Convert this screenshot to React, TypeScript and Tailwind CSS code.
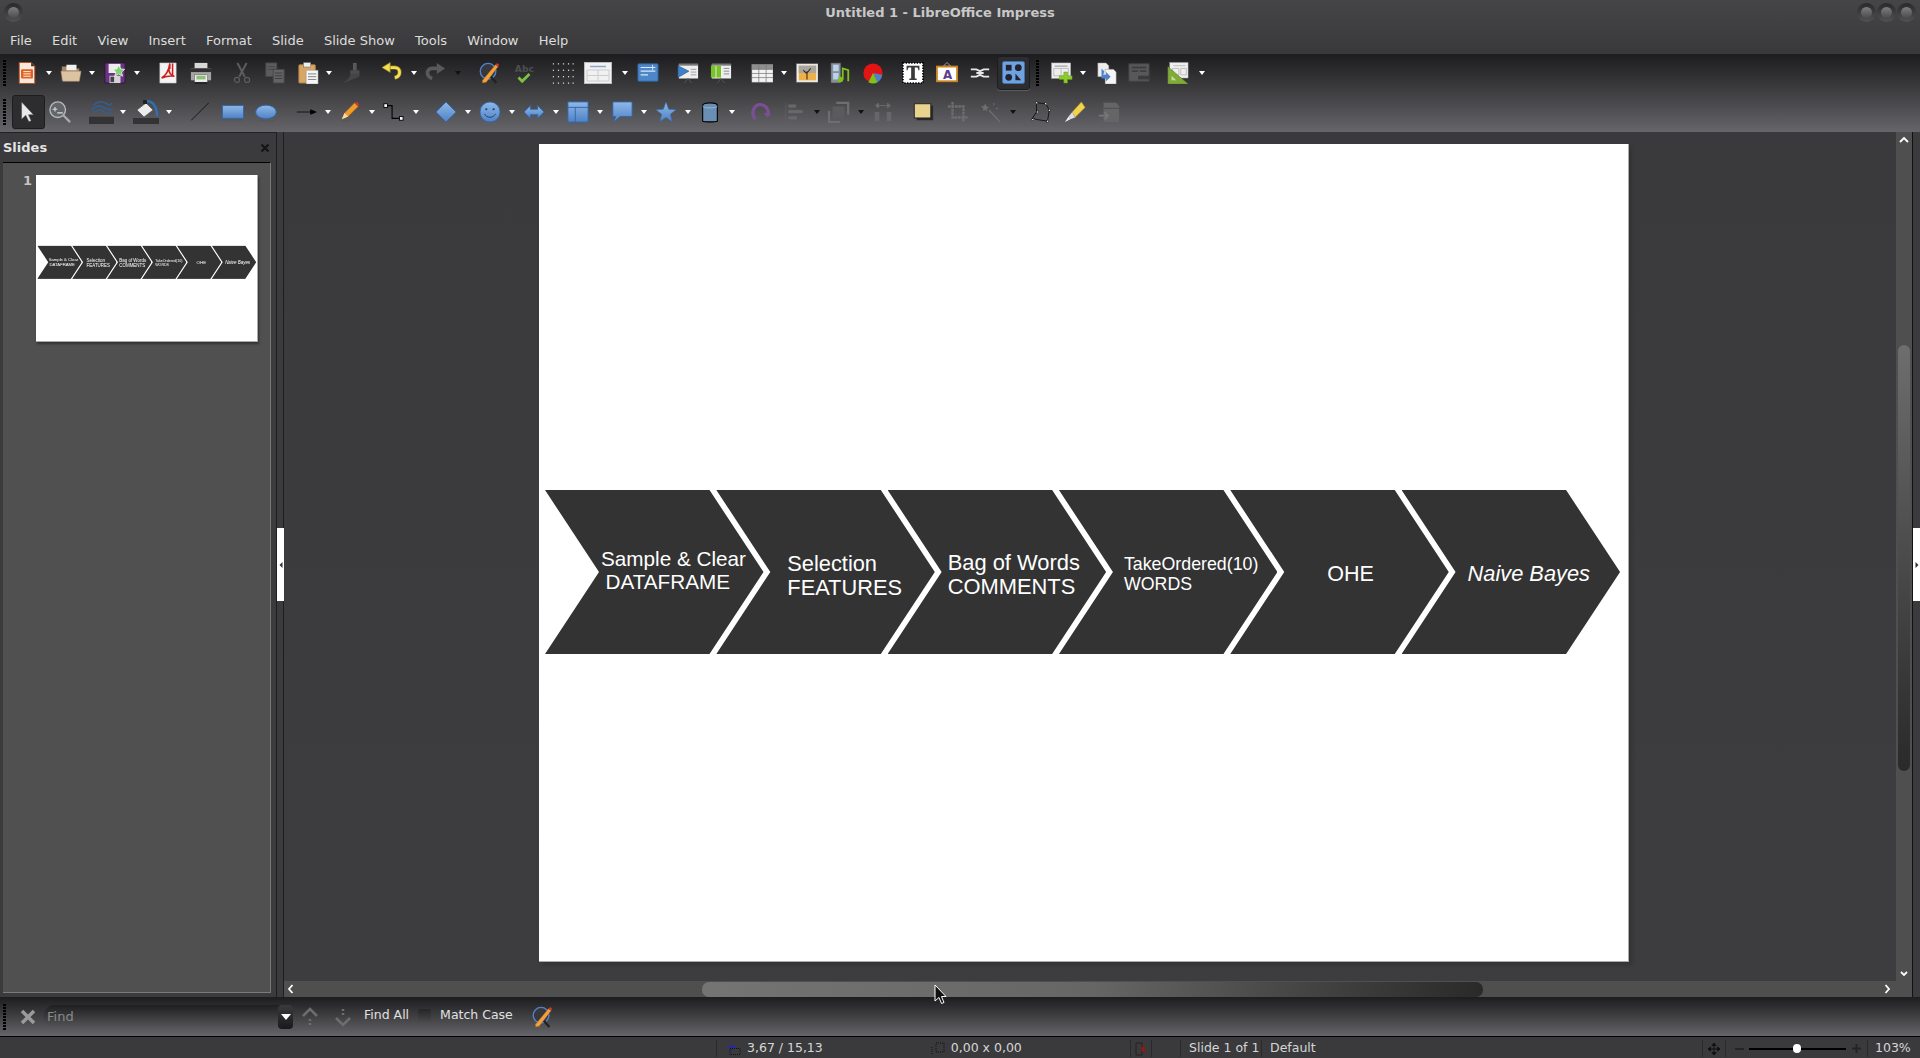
import React from "react";

type P = { c?: string; children?: React.ReactNode };
const S = ({ c = "h-[22px] w-[22px]", v = "0 0 24 24", children }: P & { v?: string }) => (
  <svg viewBox={v} className={`block flex-none ${c}`}>
    {children}
  </svg>
);
const DD = ({ c = "", dark }: { c?: string; dark?: boolean }) => (
  <svg viewBox="0 0 10 6" className={`block h-[6px] w-[10px] flex-none ${c}`}>
    <path d="M2 1h6L5 5z" fill={dark ? "#111" : "#fff"} />
  </svg>
);
const Grip = ({ c = "" }: { c?: string }) => (
  <div className={`flex h-[26px] w-[4px] flex-none flex-col gap-[1px] ${c}`}>
    {Array.from({ length: 9 }).map((_, i) => (
      <div key={i} className="h-[2px] w-[3px] bg-black" />
    ))}
  </div>
);

const New = () => <><path d="M3.500 .500h13l4 4v19h-17z" fill="#f6e9dc" stroke="#b4481b" /><path d="M16.500 .500l4 4h-4z" fill="#4a2b1c" /><rect x="5.500" y="8" width="13" height="10" rx="1" fill="#e0601f" /><path d="M8 10.500h8M8 13h8M8 15.500h8" stroke="#fff" /></>;
const Open = () => <><path d="M2 5h8l2 2h9v13H2z" fill="#a58a69" /><path d="M7 3h11v6H7z" fill="#f4f2ec" /><path d="M1 10h22l-2 11H3z" fill="#dcc4a2" stroke="#a98f6e" strokeWidth=".6" /></>;
const Save = () => <><rect x="1" y="1" width="22" height="22" rx="1" fill="#6a3483" stroke="#2c1538" /><rect x="5" y="2" width="13" height="10" fill="#efeaf0" /><rect x="6" y="15" width="12" height="8" fill="#d7d2d8" /><rect x="7" y="16" width="4" height="6" fill="#444" /><path d="M16 3l2 4.500 4.500.5-3.300 3 1 4.500-4.200-2.400-4.200 2.400 1-4.500-3.300-3 4.500-.5z" fill="#7bd46f" stroke="#fff" strokeWidth=".8" /></>;
const Pdf = () => <><path d="M3 1h18v22H3z" fill="#f4f4f4" stroke="#aaa" strokeWidth=".5" /><path d="M14 1.500c-1 7-4 13-9 16 5-2 9-3 14-2-4-1-6-4-6-8M14 1.500v6M17 1.500v14" fill="none" stroke="#cf1c1c" strokeWidth="1.700" /></>;
const Print = () => <><rect x="5" y="1" width="14" height="6" fill="#d8d8d8" /><path d="M1 7h22v13H1z" fill="#a5a5a5" /><path d="M1 7h22v4H1z" fill="#2f2f2f" /><rect x="5" y="14" width="14" height="8" fill="#eee" stroke="#555" strokeWidth=".5" /><rect x="7" y="15" width="10" height="4" fill="#8fbf7a" /><path d="M5 23h14" stroke="#222" strokeWidth="2" /></>;
const Cut = () => <g fill="none" stroke="#5c5c5e" strokeWidth="2.200"><path d="M7 1l8 15M17 1L9 16" /><circle cx="6.500" cy="19.500" r="2.800" strokeWidth="1.300" /><circle cx="17.500" cy="19.500" r="2.800" strokeWidth="1.300" /></g>;
const Copy = () => <><rect x="2" y="1" width="12" height="15" fill="#5c5c5e" stroke="#454547" /><path d="M4 5h8M4 8h8" stroke="#454547" /><rect x="10" y="8" width="12" height="15" fill="#636365" stroke="#444" /><path d="M12 12h8M12 15h8M12 18h8" stroke="#3c3c3e" /></>;
const Paste = () => <><rect x="2" y="3" width="18" height="20" rx="1" fill="#d9a765" stroke="#a87b3f" /><rect x="7" y=".500" width="8" height="5" fill="#eee" stroke="#555" strokeWidth=".5" /><path d="M10 9h13v15H10z" fill="#f7f7f7" stroke="#888" strokeWidth=".5" /><path d="M12 13h9M12 16h9M12 19h9" stroke="#777" /></>;
const Clone = () => <><rect x="12" y="1" width="4" height="8" fill="#59595b" /><path d="M9 9h10v4H9z" fill="#4d4d4f" /><path d="M9 13h10v3L4 22H1c5-2 8-5 8-9z" fill="#454547" /></>;
const Undo = () => <><path d="M9 6h6c7 0 7 10 0 11" fill="none" stroke="#8e7a1e" strokeWidth="4.500" /><path d="M9 6h6c7 0 7 10 0 11" fill="none" stroke="#f4de55" strokeWidth="3" /><path d="M10 .500L1 6l9 5.500z" fill="#f4de55" stroke="#8e7a1e" strokeWidth=".7" /></>;
const Redo = () => <><path d="M15 7H9c-7 0-7 9 0 11" fill="none" stroke="#59595b" strokeWidth="4" /><path d="M14 1l9 6-9 6z" fill="#59595b" /></>;
const Find = () => <><circle cx="11" cy="10" r="8.500" fill="#37373c" stroke="#4f83c9" strokeWidth="1.500" /><path d="M14 16l6 7" stroke="#222" strokeWidth="2.500" /><path d="M5 20L19 3l3 2L9 22l-4 1z" fill="#f2a13c" stroke="#a5641c" strokeWidth=".5" /><path d="M19 3l3 2 1-2-2-2z" fill="#d8342c" /></>;
const Spell = () => <><text x="2" y="11" fontSize="10" fontFamily="DejaVu Sans" fill="#4e4e50" fontWeight="700">Abc</text><path d="M6 17l4 4 8-8" fill="none" stroke="#7cc242" strokeWidth="3" /></>;
const Dots = () => <g fill="#e4e4e4">{[1.500, 7, 12.500, 18, 23].flatMap((x) => [2, 9, 16, 23].map((y) => <rect key={`${x}${y}`} x={x - 0.6} y={y - 0.6} width="1.300" height="1.300" />))}</g>;
const Lay = () => <><rect x=".500" y=".500" width="27" height="21" fill="#f1f1f1" stroke="#bbb" /><path d="M6 4.500h16" stroke="#8aa7cf" strokeWidth="1.500" /><path d="M3 8h22v11H3zM14 8v11M3 13.500h22" stroke="#ccc" fill="none" /></>;
const Form = () => <><rect x="1" y="2" width="22" height="19" rx="1" fill="#4d86c9" stroke="#2b5e9e" /><path d="M4 6h16M4 10h16M4 14h8" stroke="#dbe8f7" strokeWidth="1.200" /><path d="M17 3v6" stroke="#dbe8f7" /></>;
const Present = () => <><rect x="2" y="2" width="21" height="16" fill="#eee" /><path d="M2 2h21v2H2z" fill="#777" /><path d="M1 4l12 6-12 7z" fill="#3f7fc4" stroke="#1f4f87" strokeWidth=".6" /><path d="M15 8h6M15 11h6M15 14h6" stroke="#999" /><path d="M12 18l-4 5M12 18l4 5" stroke="#555" /></>;
const Present2 = () => <><rect x="2" y="2" width="21" height="16" fill="#eee" /><path d="M2 2h21v2H2z" fill="#777" /><rect x="1" y="4" width="5" height="13" fill="#79c229" /><rect x="7" y="4" width="5" height="13" fill="#79c229" /><path d="M15 7h6M15 10h6M15 13h6" stroke="#888" /><path d="M12 18l-4 5M12 18l4 5" stroke="#555" /></>;
const Tbl = () => <><rect x="1" y="3" width="23" height="19" fill="#f2f2f2" stroke="#999" strokeWidth=".5" /><path d="M1 3h23v5H1z" fill="#8f8f8f" /><path d="M1 8h23M1 12.500h23M1 17h23M8.500 3v19M16.500 3v19" stroke="#777" strokeWidth=".8" /></>;
const Img = () => <><rect x=".500" y="2" width="23.500" height="20" fill="#eee" stroke="#888" strokeWidth=".5" /><rect x="3" y="4" width="19" height="16" fill="#efb04a" /><path d="M3 4h19v8H3z" fill="#a8a6a0" /><path d="M12 19v-9M12 13l-4-4M12 12l4-5" stroke="#3d2c1c" strokeWidth="1.200" fill="none" /></>;
const Movie = () => <><rect x="2" y="1" width="11" height="22" fill="#8a8f96" stroke="#333" strokeWidth=".7" /><rect x="4.500" y="3" width="6" height="7" fill="#b8d3ef" /><rect x="4.500" y="12" width="6" height="7" fill="#b8d3ef" /><path d="M15 19V7l6 2v12" fill="none" stroke="#7ec11f" strokeWidth="2" /><circle cx="12.500" cy="19" r="3" fill="#7ec11f" /></>;
const Chart = () => <><circle cx="12" cy="12" r="10.500" fill="#e31414" /><path d="M12 12l10 2a10.500 10.500 0 0 1-5 8z" fill="#4f83c9" /><path d="M12 12l5 10a10.500 10.500 0 0 1-10 0z" fill="#7ec11f" /></>;
const TextB = () => <><rect x="1" y="1" width="22" height="22" fill="#fff" stroke="#000" strokeDasharray="1.500 1.500" strokeWidth="2" /><path d="M5 4h14v5h-1l-1-3h-3v12h2v1.500H8V18h2V6H7L6 9H5z" fill="#3a3a3a" /></>;
const Fontwork = () => <><path d="M12 .500l4 4H8z" fill="none" stroke="#aaa" /><rect x="1" y="5" width="22" height="16" fill="#fff" stroke="#c9841f" strokeWidth="2" /><text x="7.500" y="18" fontSize="13" fontWeight="700" fontFamily="DejaVu Sans" fill="#5b3d8c">A</text></>;
const Glue = () => <path d="M2 8h6l4 2 4-2h6M2 16h6l4-2 4 2h6M8 12h8" stroke="#e8e8e8" strokeWidth="2" fill="none" />;
const Shapes = () => <><rect x=".500" y=".500" width="23" height="23" rx="2" fill="#6fa3df" stroke="#3f73b0" /><rect x="4" y="4" width="6" height="6" fill="#223" /><circle cx="17" cy="7" r="3.500" fill="#223" /><circle cx="7" cy="17" r="3.500" fill="#223" /><path d="M14 13l6 7h-6z" fill="#223" /></>;
const NewSlide = () => <><rect x=".500" y="1" width="21" height="17" fill="#eee" stroke="#999" strokeWidth=".5" /><path d="M4 4.500h14" stroke="#aaa" strokeWidth="1.500" /><path d="M3 7h16v8H3zM11 7v8" fill="none" stroke="#bbb" /><path d="M14 11h4v4h5v4h-5v4h-4v-4H9v-4h5z" fill="#8ccb2e" stroke="#5f9a16" strokeWidth=".5" /></>;
const Dup = () => <><path d="M2 1h9l3 3v12H2z" fill="#eee" stroke="#888" strokeWidth=".5" /><path d="M10 8h9l3 3v13H10z" fill="#f5f5f5" stroke="#888" strokeWidth=".5" /><path d="M6 7l3 3-1 4h3v-3l5 5-5 5v-3H6z" fill="#4f83c9" /></>;
const Sum = () => <><rect x="1" y="2" width="22" height="19" fill="#58585a" stroke="#444" /><path d="M4 6h16M4 10h7M13 10h7" stroke="#3e3e40" strokeWidth="2" /><rect x="11" y="15" width="13" height="4" fill="#3b3b3d" /></>;
const Master = () => <><rect x="3" y=".500" width="20" height="17" fill="#eee" stroke="#999" strokeWidth=".5" /><path d="M7 4h13M6 7h7v7H6zM15 7h6v7h-6z" fill="none" stroke="#bbb" /><path d="M1 5l22 19H1z" fill="#80aa3a" stroke="#5c7e25" strokeWidth=".6" /><path d="M5 15l5 5H5z" fill="#c7dc8f" /></>;

const Arrow = () => <path d="M5 1v19l4.500-4.500 3.500 7 2.500-1-3-6.500H18z" fill="#e9e9e9" stroke="#444" strokeWidth=".5" />;
const Zoom = () => <><circle cx="9.500" cy="9.500" r="8.500" fill="#62656a" stroke="#b5b9be" strokeWidth="1.500" /><path d="M15 15l8 8" stroke="#aaa" strokeWidth="2.500" /><path d="M4 9h5M6.500 6.500v5M9 13h6" stroke="#ddd" fill="none" strokeWidth="1.200" /></>;
const LineCol = () => <><path d="M4 6c5-4 9-4 12-2s5 2 6 0M2 10c5-4 9-4 12-2s7 3 9 1M4 13c4-3 8-3 10-1s5 2 7 0" fill="none" stroke="#2f5f99" strokeWidth="1.300" /><rect y="17" width="24" height="7" fill="#333335" /></>;
const FillCol = () => <><path d="M4 11l9-7 7 7-9 7z" fill="#ececec" stroke="#555" strokeWidth=".7" /><path d="M11 3c6-3 13 2 13 14" fill="none" stroke="#2f6fb3" strokeWidth="2.500" /><rect x="10" y="1" width="4" height="4" fill="#222" /><rect y="19" width="26" height="6" fill="#333335" /></>;
const LineI = () => <path d="M2.500 21L21.500 2" stroke="#111" strokeWidth="1" />;
const Rect = () => <><rect x=".500" y="5" width="23" height="14" fill="url(#blueg)" stroke="#2f66a9" /><rect x="1" y="20" width="22" height="1.200" fill="#555" /></>;
const Ell = () => <><ellipse cx="12" cy="12" rx="11.300" ry="7.500" fill="url(#blueg)" stroke="#2f66a9" /><rect x="3" y="21" width="18" height="1.200" fill="#555" /></>;
const ArrowR = () => <path d="M2 12h19M17 9.500l6 2.500-6 2.500z" stroke="#000" fill="#000" strokeWidth=".8" />;
const Pencil = () => <><path d="M3 20l3-7L17 2l4 4L10 17z" fill="#ef9b2d" stroke="#8f5a14" strokeWidth=".6" /><path d="M17 2l4 4 1-2-2-3z" fill="#d8342c" /><path d="M3 20l3-7 4 4z" fill="#f3dcb3" /><path d="M3 22h9" stroke="#555" /></>;
const Conn = () => <><path d="M4 5h7v14h10" fill="none" stroke="#000" strokeWidth="1.200" /><rect x="2" y="3" width="4" height="4" fill="#fff" stroke="#000" /><rect x="19" y="17" width="4" height="4" fill="#fff" stroke="#000" /></>;
const Dia = () => <path d="M12 1l11 11-11 11L1 12z" fill="url(#blueg)" stroke="#2f66a9" />;
const Smile = () => <><circle cx="12" cy="12" r="11" fill="url(#blueg)" stroke="#2f66a9" /><circle cx="8" cy="9" r="1.200" fill="#1c3f6e" /><circle cx="16" cy="9" r="1.200" fill="#1c3f6e" /><path d="M6 14c2 5 10 5 12 0" fill="none" stroke="#1c3f6e" /></>;
const Dbl = () => <path d="M1 12l7-7v4h8V5l7 7-7 7v-4H8v4z" fill="url(#blueg)" stroke="#2f66a9" />;
const Flow = () => <><rect x="1" y="1" width="22" height="22" fill="url(#blueg)" stroke="#2f66a9" /><path d="M1 7h22M9 7v16" stroke="#2f66a9" /></>;
const Call = () => <path d="M3 1h19a1 1 0 0 1 1 1v14a1 1 0 0 1-1 1H10l-7 6 2-6H3a1 1 0 0 1-1-1V2a1 1 0 0 1 1-1z" fill="url(#blueg)" stroke="#2f66a9" />;
const Star = () => <path d="M12 1l3 8 8 .5-6.200 5 2 8L12 18l-6.800 4.500 2-8L1 9.500 9 9z" fill="url(#blueg)" stroke="#2f66a9" strokeWidth=".6" />;
const Cyl = () => <><path d="M4 5c0-4 16-4 16 0v17c-2 1-14 1-16 0z" fill="#6a8fb5" stroke="#000" strokeWidth="1.200" /><path d="M4 6c2 2 14 2 16 0" fill="none" stroke="#9bb8d6" /></>;
const Rot = () => <><path d="M7 20C1 13 6 4 12 4s10 5 9 12" fill="none" stroke="#7b4f95" strokeWidth="3.500" /><path d="M16 13h8l-4 5z" fill="#7b4f95" /></>;
const Align = () => <path d="M2 2v20M5 4h8v3H5zM5 10h15v3H5zM5 17h9v3H5z" fill="#69696b" stroke="#69696b" strokeWidth=".5" />;
const Arr = () => <><path d="M9 2h13v13" fill="none" stroke="#6e6e70" strokeWidth="2.500" /><rect x="5" y="6" width="13" height="13" fill="#5b5b5d" /><path d="M1 11v12h12" fill="none" stroke="#6e6e70" strokeWidth="2.500" /></>;
const Dist = () => <><path d="M4 5h16M4 5l3-2.500v5zM20 5l-3-2.500v5z" stroke="#6c6c6e" fill="#6c6c6e" /><rect x="3" y="12" width="5" height="10" fill="#676769" /><rect x="16" y="12" width="5" height="10" fill="#676769" /></>;
const Shadow = () => <><rect x="5" y="5" width="18" height="16" fill="#2a2a2a" /><rect x="2.500" y="3" width="18" height="15.500" fill="#e8d48e" stroke="#222" /></>;
const Crop = () => <path d="M6 1v17h17M1 6h17v17" fill="none" stroke="#6e6e70" strokeWidth="2.500" strokeDasharray="3 .8" />;
const Wand = () => <><path d="M10 10l12 13" stroke="#6e6e70" strokeWidth="1.500" /><path d="M6 3l1 3 3 .5-2.500 2 .5 3-2.500-2L3 11l.5-3L1 6l3-.5z" fill="#6e6e70" /><path d="M15 2v3M17 8h3" stroke="#6e6e70" /></>;
const Pts = () => <><path d="M6 2l10 1 4 7-2 12-13-2-3-2 4-6z" fill="none" stroke="#111" /><g fill="#fff" stroke="#000" strokeWidth=".5">{[[6, 2], [16, 3], [20, 10], [18, 22], [2, 20], [7, 12]].map(([x, y]) => <rect key={`${x}${y}`} x={x - 1} y={y - 1} width="2" height="2" />)}</g></>;
const High = () => <><path d="M9 12L19 1l4 6-11 11z" fill="#f0d44e" stroke="#a58f28" strokeWidth=".6" /><path d="M9 12l3 6-5 2-2-3z" fill="#ddd" /><path d="M5 17l2 3-6 3z" fill="#eee" /></>;
const Ext = () => <><path d="M6 2h14l3 4v17H6z" fill="#656567" /><path d="M6 8h17" stroke="#4c4c4e" /><path d="M1 16h9M7 12l4 4-4 4" stroke="#767678" strokeWidth="2" fill="none" /></>;

const Btn = ({ c = "", active, children }: P & { active?: boolean }) => (
  <div className={`flex h-6 w-6 flex-none items-center justify-center ${c}`}>
    {active && <div className="absolute h-[34px] w-[33px] rounded-[3px] border border-[#1d1d1f] bg-[#2d2d2f] shadow-[0_1px_0_#5c5c60]" />}
    <div className="relative flex-none">{children}</div>
  </div>
);

const Win = () => (
  <div className="flex h-[19px] w-[19px] flex-none items-center justify-center rounded-full bg-linear-to-b from-[#29292b] to-[#525254]">
    <div className="h-[11px] w-[11px] rounded-full bg-linear-to-b from-[#7e7e80] to-[#4c4c4e]" />
  </div>
);

const Chev = ({ c = "", t = "", children }: { c?: string; t?: string; children: React.ReactNode }) => (
  <div className={`h-[164px] w-[218.500px] flex-none bg-[#333333] text-white [clip-path:polygon(0_0,164.500px_0,218.500px_82px,164.500px_164px,0_164px,54px_82px)] ${t} ${c}`}>
    {children}
  </div>
);

const Slide = () => (
  <div className="flex h-[817px] w-[1089px] bg-white pl-[6px] pt-[346px] font-['Liberation_Sans',sans-serif]">
    <Chev t="pl-[56px] pt-[57px] text-center text-[20.700px] leading-[23px]"><div className="w-[145px] whitespace-pre">Sample &amp; Clear</div><div className="w-[145px] whitespace-pre">DATAFRAME{"\u00a0\u00a0"}</div></Chev>
    <Chev c="-ml-[47.200px]" t="pl-[71px] pt-[62px] text-[21.800px] leading-[24px]"><div>Selection</div><div>FEATURES</div></Chev>
    <Chev c="-ml-[47.200px]" t="pl-[60px] pt-[61px] text-[21.900px] leading-[24px]"><div>Bag of Words</div><div>COMMENTS</div></Chev>
    <Chev c="-ml-[47.200px]" t="pl-[65px] pt-[64px] text-[17.800px] leading-[20px]"><div>TakeOrdered(10)</div><div>WORDS</div></Chev>
    <Chev c="-ml-[47.200px]" t="pl-[97px] pt-[72px] text-[21.500px] leading-[24px]"><div>OHE</div></Chev>
    <Chev c="-ml-[47.200px]" t="pl-[66px] pt-[72px] text-[21.800px] italic leading-[24px]"><div>Naive Bayes</div></Chev>
  </div>
);

const Ch = ({ d, c = "" }: { d: string; c?: string }) => (
  <svg viewBox="0 0 10 10" className={`block h-[10px] w-[10px] flex-none ${c}`}>
    <path d={d} fill="none" stroke="#fff" strokeWidth="1.800" />
  </svg>
);

export default function App() {
  const menu = ["File", "Edit", "View", "Insert", "Format", "Slide", "Slide Show", "Tools", "Window", "Help"];
  return (
    <div className="relative flex h-[1058px] w-[1920px] flex-col overflow-hidden bg-[#3b3b3d] font-['DejaVu_Sans',sans-serif] text-[13px] text-[#dcdcdc]">
      <svg className="absolute h-0 w-0">
        <defs>
          <linearGradient id="blueg" x1="0" y1="0" x2="0" y2="1">
            <stop offset="0" stopColor="#8fb8e8" />
            <stop offset="1" stopColor="#4f82c4" />
          </linearGradient>
        </defs>
      </svg>
      {/* title + menu */}
      <div className="flex h-[54px] flex-none flex-col bg-linear-to-b from-[#454547] to-[#39393b]">
        <div className="flex h-[24px] flex-none items-center pl-[4px] pr-[4px]">
          <Win />
          <div className="flex-1 pt-[2px] text-center text-[13px] font-bold text-[#c8c8c8]">Untitled 1 - LibreOffice Impress</div>
          <div className="flex gap-[1px]"><Win /><Win /><Win /></div>
        </div>
        <div className="flex h-[30px] flex-none items-center pt-[4px]">
          {menu.map((m) => (
            <div key={m} className="px-[10.100px]">{m}</div>
          ))}
        </div>
      </div>

      {/* toolbars */}
      <div className="relative z-0 flex h-[78px] flex-none flex-col bg-linear-to-b from-[#1d1d1f] to-[#66666a]">
        <div className="flex h-[37px] flex-none items-center">
          <Grip c="ml-[3px]" />
          <Btn c="ml-[8px]"><S><New /></S></Btn><DD c="ml-[5px]" />
          <Btn c="ml-[5px]"><S><Open /></S></Btn><DD c="ml-[4px]" />
          <Btn c="ml-[6px]"><S><Save /></S></Btn><DD c="ml-[5px]" />
          <Btn c="ml-[14px]"><S><Pdf /></S></Btn>
          <Btn c="ml-[9px]"><S><Print /></S></Btn>
          <Btn c="ml-[17px]"><S><Cut /></S></Btn>
          <Btn c="ml-[9px]"><S><Copy /></S></Btn>
          <Btn c="ml-[9px]"><S><Paste /></S></Btn><DD c="ml-[4px]" />
          <Btn c="ml-[7px]"><S><Clone /></S></Btn>
          <Btn c="ml-[15px]"><S><Undo /></S></Btn><DD c="ml-[5px]" />
          <Btn c="ml-[4px]"><S><Redo /></S></Btn><DD dark c="ml-[6px]" />
          <Btn c="ml-[14px]"><S><Find /></S></Btn>
          <Btn c="ml-[11px]"><S><Spell /></S></Btn>
          <Btn c="ml-[15px]"><S><Dots /></S></Btn>
          <Btn c="ml-[11px]"><S c="h-[22px] w-[28px]" v="0 0 28 22"><Lay /></S></Btn><DD c="ml-[10px]" />
          <Btn c="ml-[6px]"><S><Form /></S></Btn>
          <Btn c="ml-[16px]"><S><Present /></S></Btn>
          <Btn c="ml-[9px]"><S><Present2 /></S></Btn>
          <Btn c="ml-[17px]"><S><Tbl /></S></Btn><DD c="ml-[5px]" />
          <Btn c="ml-[6px]"><S><Img /></S></Btn>
          <Btn c="ml-[9px]"><S><Movie /></S></Btn>
          <Btn c="ml-[9px]"><S><Chart /></S></Btn>
          <Btn c="ml-[16px]"><S><TextB /></S></Btn>
          <Btn c="ml-[10px]"><S><Fontwork /></S></Btn>
          <Btn c="ml-[9px]"><S><Glue /></S></Btn>
          <Btn c="ml-[9px]" active><S c="h-[23px] w-[23px]"><Shapes /></S></Btn>
          <Grip c="ml-[11px]" />
          <Btn c="ml-[10px]"><S><NewSlide /></S></Btn><DD c="ml-[4px]" />
          <Btn c="ml-[7px]"><S><Dup /></S></Btn>
          <Btn c="ml-[8px]"><S><Sum /></S></Btn>
          <Btn c="ml-[15px]"><S><Master /></S></Btn><DD c="ml-[7px]" />
        </div>
        <div className="flex h-[41px] flex-none items-center">
          <Grip c="ml-[3px]" />
          <Btn c="ml-[9px]" active><S><Arrow /></S></Btn>
          <Btn c="ml-[8px]"><S><Zoom /></S></Btn>
          <Btn c="ml-[17px]"><S c="h-[25px] w-[25px]"><LineCol /></S></Btn><DD c="ml-[5px]" />
          <Btn c="ml-[6px]"><S c="h-[26px] w-[26px]" v="0 0 26 26"><FillCol /></S></Btn><DD c="ml-[6px]" />
          <Btn c="ml-[14px]"><S><LineI /></S></Btn>
          <Btn c="ml-[9px]"><S><Rect /></S></Btn>
          <Btn c="ml-[9px]"><S><Ell /></S></Btn>
          <Btn c="ml-[16px]"><S><ArrowR /></S></Btn><DD c="ml-[5px]" />
          <Btn c="ml-[5px]"><S><Pencil /></S></Btn><DD c="ml-[5px]" />
          <Btn c="ml-[4px]"><S><Conn /></S></Btn><DD c="ml-[6px]" />
          <Btn c="ml-[13px]"><S><Dia /></S></Btn><DD c="ml-[5px]" />
          <Btn c="ml-[5px]"><S><Smile /></S></Btn><DD c="ml-[5px]" />
          <Btn c="ml-[5px]"><S><Dbl /></S></Btn><DD c="ml-[5px]" />
          <Btn c="ml-[5px]"><S><Flow /></S></Btn><DD c="ml-[5px]" />
          <Btn c="ml-[5px]"><S><Call /></S></Btn><DD c="ml-[5px]" />
          <Btn c="ml-[5px]"><S><Star /></S></Btn><DD c="ml-[5px]" />
          <Btn c="ml-[5px]"><S><Cyl /></S></Btn><DD c="ml-[5px]" />
          <Btn c="ml-[11px]"><S><Rot /></S></Btn>
          <Btn c="ml-[11px]"><S><Align /></S></Btn><DD dark c="ml-[5px]" />
          <Btn c="ml-[5px]"><S><Arr /></S></Btn><DD dark c="ml-[5px]" />
          <Btn c="ml-[5px]"><S><Dist /></S></Btn>
          <Btn c="ml-[16px]"><S><Shadow /></S></Btn>
          <Btn c="ml-[11px]"><S><Crop /></S></Btn>
          <Btn c="ml-[9px]"><S><Wand /></S></Btn><DD dark c="ml-[5px]" />
          <Btn c="ml-[12px]"><S><Pts /></S></Btn>
          <Btn c="ml-[9px]"><S><High /></S></Btn>
          <Btn c="ml-[10px]"><S><Ext /></S></Btn>
        </div>
      </div>

      {/* main */}
      <div className="flex h-[865px] flex-none">
        <div className="flex w-[276px] flex-none flex-col border-t border-[#222] pb-[4px]">
          <div className="flex h-[29px] flex-none items-center justify-between pl-[3px] pr-[6px] font-bold text-[#e4e4e4]">
            <span>Slides</span>
            <svg viewBox="0 0 10 10" className="block h-[10px] w-[10px]"><path d="M1.500 1.500l7 7M8.500 1.500l-7 7" stroke="#151515" strokeWidth="2.200" /></svg>
          </div>
          <div className="ml-[3px] mr-[5px] flex flex-1 items-start border-t border-r border-b border-t-black border-r-[#7a7a7a] border-b-[#7a7a7a] bg-[#505050] pl-[20px] pt-[12px]">
            <div className="-mt-[2px] w-[13px] text-[13px] font-bold leading-[15px] text-[#c4c4c4]">1</div>
            <div className="h-[167px] w-[222px] overflow-hidden border-r border-b border-[#aaa] shadow-[1px_2px_2px_#333]">
              <div className="origin-top-left scale-[.2037] blur-[1.500px]"><Slide /></div>
            </div>
          </div>
        </div>
        <div className="flex w-[8px] flex-none items-center border-x border-[#1e1e1e] bg-[#3b3b3d]">
          <div className="flex h-[73px] w-[7px] flex-none items-center justify-center bg-white">
            <svg viewBox="0 0 6 8" className="block h-[8px] w-[6px]"><path d="M4.500 1L1.500 4l3 3z" fill="#333" /></svg>
          </div>
        </div>
        <div className="flex min-w-0 flex-1 flex-col">
          <div className="flex h-[849px] flex-none">
            <div className="flex-1 bg-linear-to-b from-[#3a3a3c] to-[#3d3d3f] pl-[255px] pt-[12px]">
              <div className="w-[1090px] border-r border-b border-[#aaa] shadow-[3px_3px_3px_#343436]"><Slide /></div>
            </div>
            <div className="flex w-[16px] flex-none flex-col items-center justify-between bg-[#4f4f4f] px-[2px] pt-[3px] pb-[3px]">
              <Ch d="M1 7l4-4 4 4" />
              <div className="absolute top-[345px] h-[426px] w-[12px] rounded-[6px] bg-linear-to-b from-[#6e6e6e] to-[#2a2a2a]" />
              <Ch d="M2 4l3 3 3-3" />
            </div>
          </div>
          <div className="flex h-[16px] flex-none items-center bg-[#4f4f4f]">
            <Ch d="M6.500 1L3 5l3.500 4" c="ml-[2px]" />
            <div className="ml-[406px] h-[15px] w-[781px] flex-none rounded-[7px] bg-linear-to-r from-[#747474] via-[#666666] to-[#2a2a2a]" />
            <Ch d="M3.500 1L7 5 3.500 9" c="ml-[399px]" />
          </div>
        </div>
        <div className="flex w-[8px] flex-none items-center border-l border-[#111] bg-[#3b3b3d]">
          <div className="flex h-[73px] w-[7px] flex-none items-center justify-center bg-white">
            <svg viewBox="0 0 6 8" className="block h-[8px] w-[6px]"><path d="M1.500 1l3 3-3 3z" fill="#333" /></svg>
          </div>
        </div>
      </div>

      {/* find bar */}
      <div className="flex h-[39px] flex-none items-center bg-linear-to-b from-[#1d1d1f] to-[#66666a] text-[12.500px]">
        <Grip c="ml-[3px]" />
        <svg viewBox="0 0 16 16" className="ml-[13px] block h-[16px] w-[16px] flex-none"><path d="M2 2l12 12M14 2L2 14" stroke="#9a9a9a" strokeWidth="3.500" /></svg>
        <div className="ml-[8px] flex h-[24px] w-[249px] flex-none items-center rounded-l-[10px] rounded-r-[4px] bg-linear-to-b from-[#1f1f21] to-[#59595b]">
          <span className="ml-[3px] flex-1 text-[13px] text-[#8a8a8a]">Find</span>
          <div className="flex h-[24px] w-[15px] items-center justify-center rounded-[4px] bg-linear-to-b from-[#3a3a3c] to-[#1a1a1c]"><svg viewBox="0 0 10 6" className="block h-[6px] w-[10px]"><path d="M0 0h10L5 6z" fill="#fff" /></svg></div>
        </div>
        <svg viewBox="0 0 20 24" className="ml-[7px] block h-[24px] w-[20px] flex-none"><path d="M3 11l7-7 7 7M10 14v2M10 18v2" fill="none" stroke="#6d6d6f" strokeWidth="2.500" /></svg>
        <svg viewBox="0 0 20 24" className="ml-[13px] block h-[24px] w-[20px] flex-none"><path d="M3 13l7 7 7-7M10 4v2M10 8v2" fill="none" stroke="#6d6d6f" strokeWidth="2.500" /></svg>
        <span className="-mt-[2px] ml-[11px] text-[#e0e0e0]">Find All</span>
        <div className="-mt-[2px] ml-[9px] h-[13px] w-[13px] flex-none rounded-[2px] bg-linear-to-b from-[#252527] to-[#48484a]" />
        <span className="-mt-[2px] ml-[9px] text-[#e0e0e0]">Match Case</span>
        <div className="ml-[18px]"><S><Find /></S></div>
      </div>

      {/* status bar */}
      <div className="flex h-[22px] flex-none items-center border-t border-black bg-[#3a3a3c] pt-[2px] text-[12.500px] text-[#d6d6d6]">
        <div className="w-[716px] flex-none" />
        <div className="flex h-[17px] w-[414px] flex-none items-center border-l border-[#2a2a2c]">
          <svg viewBox="0 0 14 12" className="ml-[10px] block h-[12px] w-[14px] flex-none"><path d="M5 0v8M0 4h9" stroke="#1c22c8" /><path d="M3 5.500h10v6H3z" fill="none" stroke="#111" strokeDasharray="1 1" /></svg>
          <span className="ml-[6px]">3,67 / 15,13</span>
          <svg viewBox="0 0 14 14" className="ml-[108px] block h-[14px] w-[14px] flex-none"><path d="M5 1h8v9H5z" fill="none" stroke="#111" strokeDasharray="1 1" /><path d="M1 5v8" stroke="#111" strokeDasharray="1 1" /></svg>
          <span className="ml-[6px]">0,00 x 0,00</span>
        </div>
        <div className="flex h-[17px] w-[21px] flex-none items-center justify-center border-l border-[#2a2a2c]">
          <svg viewBox="0 0 12 14" className="block h-[14px] w-[12px]"><path d="M1 1h6v12H1z" fill="none" stroke="#222" /><path d="M8 4v6M5.500 5.500l5 3M10.500 5.500l-5 3" stroke="#a01515" strokeWidth="1.200" /></svg>
        </div>
        <div className="h-[17px] w-[29px] flex-none border-l border-[#2a2a2c]" />
        <div className="flex h-[17px] w-[81px] flex-none items-center border-l border-[#2a2a2c] pl-[8px]">Slide 1 of 1</div>
        <div className="flex h-[17px] w-[441px] flex-none items-center border-l border-[#2a2a2c] pl-[8px]">Default</div>
        <div className="flex h-[17px] w-[23px] flex-none items-center justify-center border-l border-[#2a2a2c]">
          <svg viewBox="0 0 14 14" className="block h-[14px] w-[14px]"><path d="M7 1v12M1 7h12M7 1L5 3.500h4zM7 13l-2-2.500h4zM1 7l2.500-2v4zM13 7l-2.500-2v4z" stroke="#111" fill="#111" /></svg>
        </div>
        <div className="flex h-[17px] w-[142px] flex-none items-center border-l border-[#2a2a2c] pl-[9px]">
          <div className="h-[2px] w-[9px] flex-none bg-[#242426]" />
          <div className="relative ml-[5px] flex h-[2px] w-[97px] flex-none items-center bg-black">
            <div className="absolute left-[44px] h-[9px] w-[8px] rounded-full bg-white" />
          </div>
          <svg viewBox="0 0 9 9" className="ml-[6px] block h-[9px] w-[9px] flex-none"><path d="M4.500 0v9M0 4.500h9" stroke="#242426" strokeWidth="2" /></svg>
        </div>
        <div className="flex h-[17px] flex-1 items-center border-l border-[#2a2a2c] pl-[7px]">103%</div>
      </div>

      {/* mouse pointer */}
      <svg viewBox="0 0 13 21" className="absolute left-[934px] top-[984px] block h-[21px] w-[13px]">
        <path d="M1 1v16l4-3.500 2.500 6 2.500-1-2.500-6H12z" fill="#111" stroke="#fff" strokeWidth="1" />
      </svg>
    </div>
  );
}
